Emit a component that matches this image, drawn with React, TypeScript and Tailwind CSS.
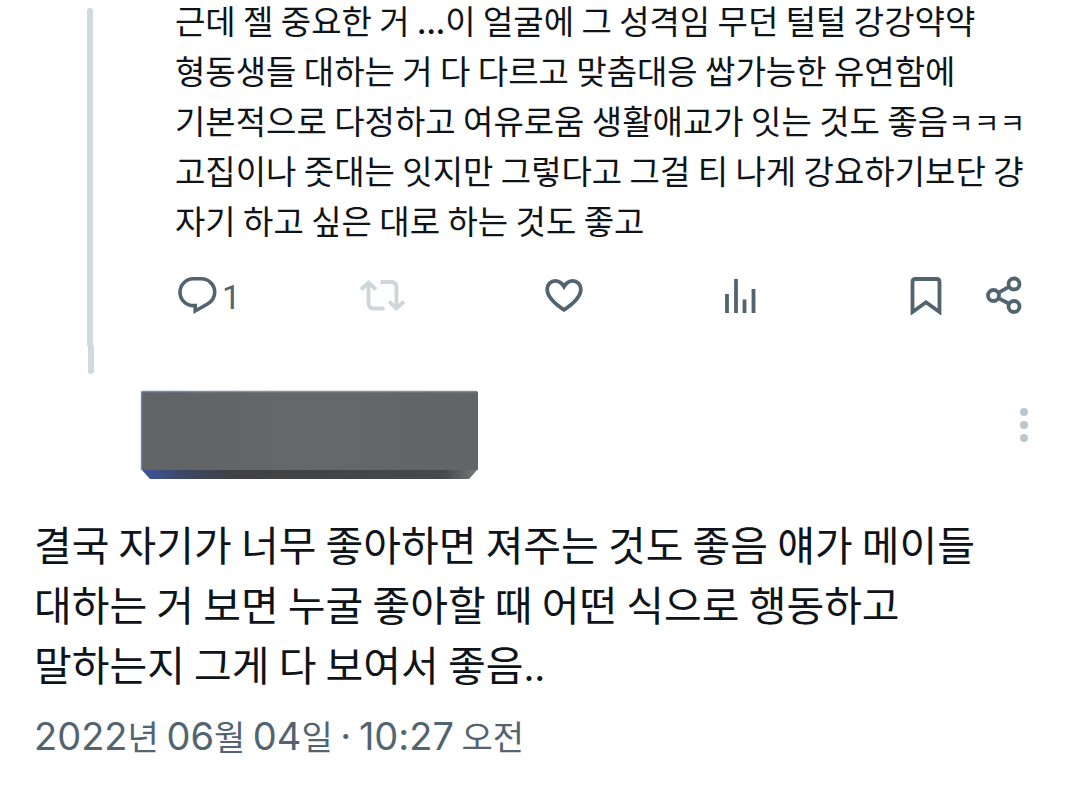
import type { ReactNode } from "react";

const parentLines = [
  "고집이나 줏대는 잇지만 그렇다고 그걸 티 나게 강요하기보단 걍",
  "자기 하고 싶은 대로 하는 것도 좋고",
];

function Action({ label, className = "", children }: { label: string; className?: string; children: ReactNode }) {
  return (
    <button type="button" aria-label={label} className={`flex items-center ${className}`}>
      {children}
    </button>
  );
}

function Latin({ children }: { children: ReactNode }) {
  return <span className="font-['Inter',sans-serif] text-[38px] leading-none">{children}</span>;
}

function Actions() {
  return (
    <div className="mt-[30px] flex h-10 items-center pl-[3px] text-[#536471]">
      <div className="grid flex-1 grid-cols-4 justify-items-start pr-1">
        <Action label="답글 1개" className="gap-1">
          <svg width="40" height="40" viewBox="0 0 40 40" fill="none" stroke="currentColor" strokeWidth="3.6">
            <path d="M15.5 3.8H23C30.5 3.8 36.7 9.4 36.7 17.2C36.7 22.8 34 26.3 29.5 29L17.2 36V30.6H15.5C8 30.6 2 24.7 2 17.2C2 9.7 8 3.8 15.5 3.8Z" />
          </svg>
          <span className="pt-1 font-['Roboto',sans-serif] text-[33px] leading-none">1</span>
        </Action>
        <Action label="재게시" className="text-[#cfd6da]">
          <svg width="46" height="40" viewBox="1 0 46 40" fill="none" stroke="currentColor" strokeWidth="3.8">
            <path d="M2 14.5L9.5 7.5L17 14.5M9.5 8V28Q9.5 33.5 15 33.5H25.5M21.5 7H32Q37.5 7 37.5 12.5V33M30 26.5L37.5 33.5L45 26.5" />
          </svg>
        </Action>
        <Action label="마음에 들어요">
          <svg width="44" height="40" viewBox="-2 0 44 40" fill="none" stroke="currentColor" strokeWidth="3.8">
            <path d="M20 34.8C12 29.5 3.2 22 3.2 14.2C3.2 9.2 7 5.8 11.2 5.8C15 5.8 18 8 20 11.5C22 8 25 5.8 28.8 5.8C33 5.8 36.8 9.2 36.8 14.2C36.8 22 28 29.5 20 34.8Z" />
          </svg>
        </Action>
        <Action label="조회수">
          <svg width="34" height="40" viewBox="1 0 34 40" fill="none" stroke="currentColor" strokeWidth="3.8">
            <path d="M4 38V19M13 38V4M21.5 38V24.5M30.5 38V14" />
          </svg>
        </Action>
      </div>
      <div className="flex items-center gap-[43px] pr-px">
        <Action label="북마크">
          <svg width="32" height="40" viewBox="0 0 32 40" fill="none" stroke="currentColor" strokeWidth="3.8">
            <path d="M2.5 37V7Q2.5 4 5.5 4H26.5Q29.5 4 29.5 7V37L16 27.3Z" />
          </svg>
        </Action>
        <Action label="공유">
          <svg width="38" height="40" viewBox="0 0 38 40" fill="none" stroke="currentColor" strokeWidth="3.8">
            <circle cx="8.5" cy="20.5" r="5.5" />
            <circle cx="29" cy="9" r="5.5" />
            <circle cx="29" cy="31.5" r="5.5" />
            <path d="M13.3 17.8L24.2 11.7M13.3 23.1L24.2 28.8" />
          </svg>
        </Action>
      </div>
    </div>
  );
}

function NameCover() {
  return (
    <svg width="338" height="90" viewBox="0 0 338 90" aria-hidden="true">
      <defs>
        <linearGradient id="face" x1="0" y1="0" x2="1" y2="0">
          <stop offset="0" stopColor="#626365" />
          <stop offset="0.5" stopColor="#666769" />
          <stop offset="1" stopColor="#636466" />
        </linearGradient>
        <linearGradient id="edge" x1="0" y1="0" x2="1" y2="0">
          <stop offset="0" stopColor="#3d569b" />
          <stop offset="0.14" stopColor="#3d4560" />
          <stop offset="0.3" stopColor="#414142" />
          <stop offset="0.9" stopColor="#48494a" />
          <stop offset="1" stopColor="#77787a" />
        </linearGradient>
        <linearGradient id="rim" x1="0" y1="0" x2="1" y2="0">
          <stop offset="0" stopColor="#7189c8" />
          <stop offset="0.3" stopColor="#8c929b" />
          <stop offset="1" stopColor="#8c8e90" />
        </linearGradient>
      </defs>
      <path d="M1 79H338L329 89H10Z" fill="url(#edge)" />
      <path d="M3 1H336Q338 1 338 3V80H1V3Q1 1 3 1Z" fill="url(#face)" />
      <path d="M1.5 80V3Q1.5 1.5 3 1.5H336" fill="none" stroke="url(#rim)" strokeWidth="1.4" />
    </svg>
  );
}

export default function App() {
  return (
    <main className="min-h-screen bg-white font-['Noto_Sans_CJK_KR',sans-serif] text-[#0f1419]">
      <article className="flex pr-14">
        <div className="flex w-[175px] shrink-0 flex-col pt-2 pl-[87px]" aria-hidden="true">
          <div className="w-[6px] grow rounded-t-full bg-[#cfd9de]" />
          <div className="ml-px h-7 w-[6px] rounded-b-full bg-[#cfd9de]" />
        </div>
        <div className="min-w-0 grow pb-[59px]">
          <p className="-mt-[5px] text-[33px] leading-[50px] whitespace-nowrap">
            <span className="block">
              근데 젤 중요한 거 <span className="font-['Inter',sans-serif] text-[28px] leading-none font-bold">...</span>이 얼굴에 그 성격임 무던 털털 강강약약
            </span>
            <span className="block">형동생들 대하는 거 다 다르고 맞춤대응 쌉가능한 유연함에</span>
            <span className="block">
              기본적으로 다정하고 여유로움 생활애교가 잇는 것도 좋음<span className="text-[28px] leading-none">ㅋㅋㅋ</span>
            </span>
            {parentLines.map((line) => (
              <span key={line} className="block">
                {line}
              </span>
            ))}
          </p>
          <Actions />
        </div>
      </article>

      <article className="px-[34px]">
        <header className="flex items-start justify-between pt-4 pl-[106px]">
          <NameCover />
          <button type="button" aria-label="더 보기" className="mt-4">
            <svg width="42" height="38" viewBox="1 0 42 38" fill="#b9c8ce">
              <circle cx="21" cy="6" r="4" />
              <circle cx="21" cy="19" r="4" />
              <circle cx="21" cy="32" r="4" />
            </svg>
          </button>
        </header>
        <p className="mt-[33px] text-[41px] leading-[60px] whitespace-nowrap">
          <span className="block">결국 자기가 너무 좋아하면 져주는 것도 좋음 얘가 메이들</span>
          <span className="block">대하는 거 보면 누굴 좋아할 때 어떤 식으로 행동하고</span>
          <span className="block">
            말하는지 그게 다 보여서 좋음<Latin>..</Latin>
          </span>
        </p>
        <time dateTime="2022-06-04T10:27" className="mt-[18px] block text-[34px] leading-[50px] whitespace-nowrap text-[#536471]">
          <Latin>2022</Latin>년 <Latin>06</Latin>월 <Latin>04</Latin>일 <Latin>·</Latin> <Latin>10:27</Latin> 오전
        </time>
      </article>
    </main>
  );
}
